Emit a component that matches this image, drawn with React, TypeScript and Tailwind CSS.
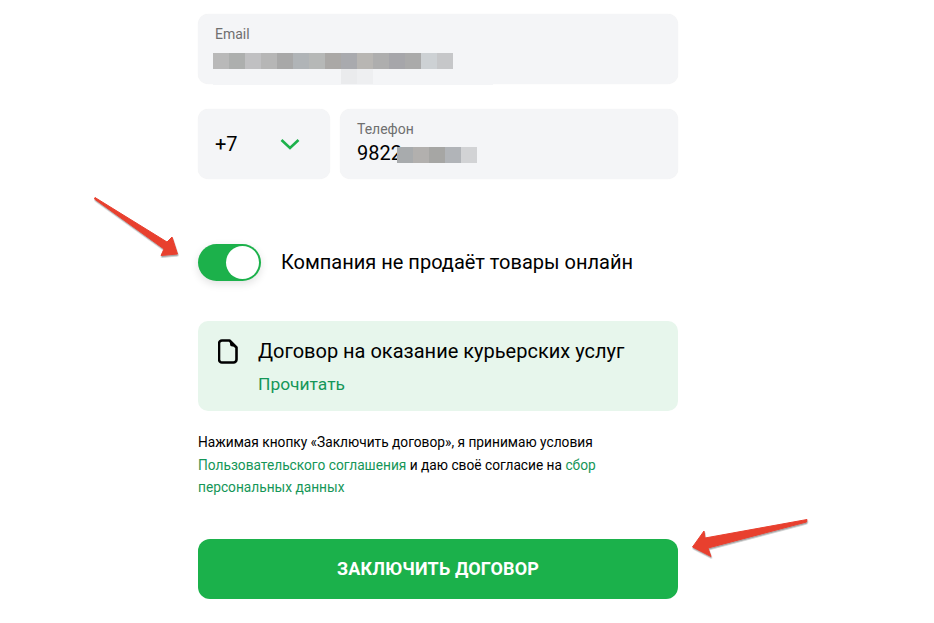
const emailCells = ["#b9b9b9", "#adafae", "#c0c0c2", "#b6b6b6", "#a8a8a8", "#b0b4b7", "#b6b8b7", "#aaa8a6", "#a9aaae", "#b8b6b3", "#aeaeae", "#a6a6aa", "#aaaaaa", "#cdd1d4", "#c6c7c9"];
const phoneCells = ["#a8abad", "#b2b0ae", "#a6a6a4", "#b1b4b8", "#d2d3d5"];

function Arrows() {
  return (
    <svg className="pointer-events-none absolute left-0 top-0" width="934" height="623" viewBox="0 0 934 623">
      <defs>
        <filter id="arrowShadow" x="-10%" y="-10%" width="120%" height="120%">
          <feDropShadow dx="0.5" dy="1.5" stdDeviation="0.7" floodColor="#555" floodOpacity="0.55" />
        </filter>
      </defs>
      <g fill="#e8402f" stroke="#e8402f" strokeWidth="1" strokeLinejoin="round" filter="url(#arrowShadow)">
        <polygon points="95,197.5 167,242 172,237 177.5,254 161,255.5 164,249 94.5,199" />
        <polygon points="807,519.5 806.5,522 708,548 711,556.5 692.5,547 704,531 705,538" />
      </g>
    </svg>
  );
}

export default function App() {
  return (
    <div className="relative h-[623px] w-[934px] overflow-hidden bg-white font-['Roboto',sans-serif] text-black">
      <div className="ml-[198px] flex w-[480px] flex-col pt-[14px]">
        <div className="relative h-[70px] rounded-[10px] bg-[#f4f5f7] pl-[17px] pt-[11px] shadow-[0_0_1px_rgba(0,0,0,0.08)]">
          <p className="text-[14px] leading-[18px] text-[#6f6f6f]">Email</p>
          <div className="absolute left-[15px] top-[39px] flex">
            {emailCells.map((c, i) => (
              <span key={i} className="h-4 w-4" style={{ backgroundColor: c }} />
            ))}
          </div>
          <div className="absolute left-[143px] top-[55px] flex">
            <span className="h-4 w-4 bg-[#eaebed]" />
            <span className="h-4 w-4 bg-[#eeeff1]" />
          </div>
          <div className="absolute left-[15px] top-[70px] h-px w-[280px] bg-[#f4f5f7]" />
        </div>

        <div className="mt-[25px] flex gap-[10px]">
          <div className="flex h-[70px] w-[132px] items-center justify-between rounded-[10px] bg-[#f4f5f7] pl-[17px] pr-[30px] shadow-[0_0_1px_rgba(0,0,0,0.08)]">
            <span className="text-[20px]">+7</span>
            <svg width="20" height="13" viewBox="0 0 20 13" fill="none">
              <path d="M1.5 2 10 10l8.5-8" stroke="#1cb14b" strokeWidth="2.6" />
            </svg>
          </div>
          <div className="relative h-[70px] flex-1 rounded-[10px] bg-[#f4f5f7] pl-[17px] pt-[11px] shadow-[0_0_1px_rgba(0,0,0,0.08)]">
            <p className="text-[14px] leading-[18px] text-[#6f6f6f]">Телефон</p>
            <p className="mt-[2px] text-[20px] leading-[26px]">9822</p>
            <div className="absolute left-[57px] top-[38px] flex">
              {phoneCells.map((c, i) => (
                <span key={i} className="h-4 w-4" style={{ backgroundColor: c }} />
              ))}
            </div>
          </div>
        </div>

        <div className="mt-[65px] flex items-center gap-[20px]">
          <div className="flex h-[37px] w-[63px] items-center justify-end rounded-full bg-[#1cb14b] pr-[2px] shadow-[0_3px_8px_rgba(0,0,0,0.12)]">
            <span className="h-[33px] w-[33px] rounded-full bg-white" />
          </div>
          <span className="-translate-y-px text-[20px] leading-[26px]">Компания не продаёт товары онлайн</span>
        </div>

        <div className="mt-[40px] flex h-[90px] rounded-[10px] bg-[#e7f6ec] pl-[20px] pt-[17px]">
          <svg className="mt-[1px]" width="20" height="25" viewBox="0 0 20 25" fill="none">
            <path d="M4 1.5h7.5l7 7V20.5a3 3 0 0 1-3 3H4a3 3 0 0 1-3-3v-16a3 3 0 0 1 3-3Z" stroke="#000" strokeWidth="2.6" strokeLinejoin="round" />
            <path d="M12 2.5v2.5a2.5 2.5 0 0 0 2.5 2.5H17Z" fill="#000" />
          </svg>
          <div className="ml-[20px]">
            <p className="text-[20px] leading-[26px]">Договор на оказание курьерских услуг</p>
            <p className="mt-[8px] text-[17.4px] leading-[24px] text-[#159658]">Прочитать</p>
          </div>
        </div>

        <p className="mt-[20px] text-[13.72px] leading-[22.5px]">
          Нажимая кнопку «Заключить договор», я принимаю условия
          <br />
          <span className="text-[#159658]">Пользовательского соглашения</span> и даю своё согласие на{" "}
          <span className="text-[#159658]">сбор</span>
          <br />
          <span className="text-[#159658]">персональных данных</span>
        </p>

        <button className="mt-[40px] h-[60px] rounded-[12px] bg-[#1bb14b] text-[18px] font-bold uppercase tracking-[0.15px] text-white">
          Заключить договор
        </button>
      </div>
      <Arrows />
    </div>
  );
}
